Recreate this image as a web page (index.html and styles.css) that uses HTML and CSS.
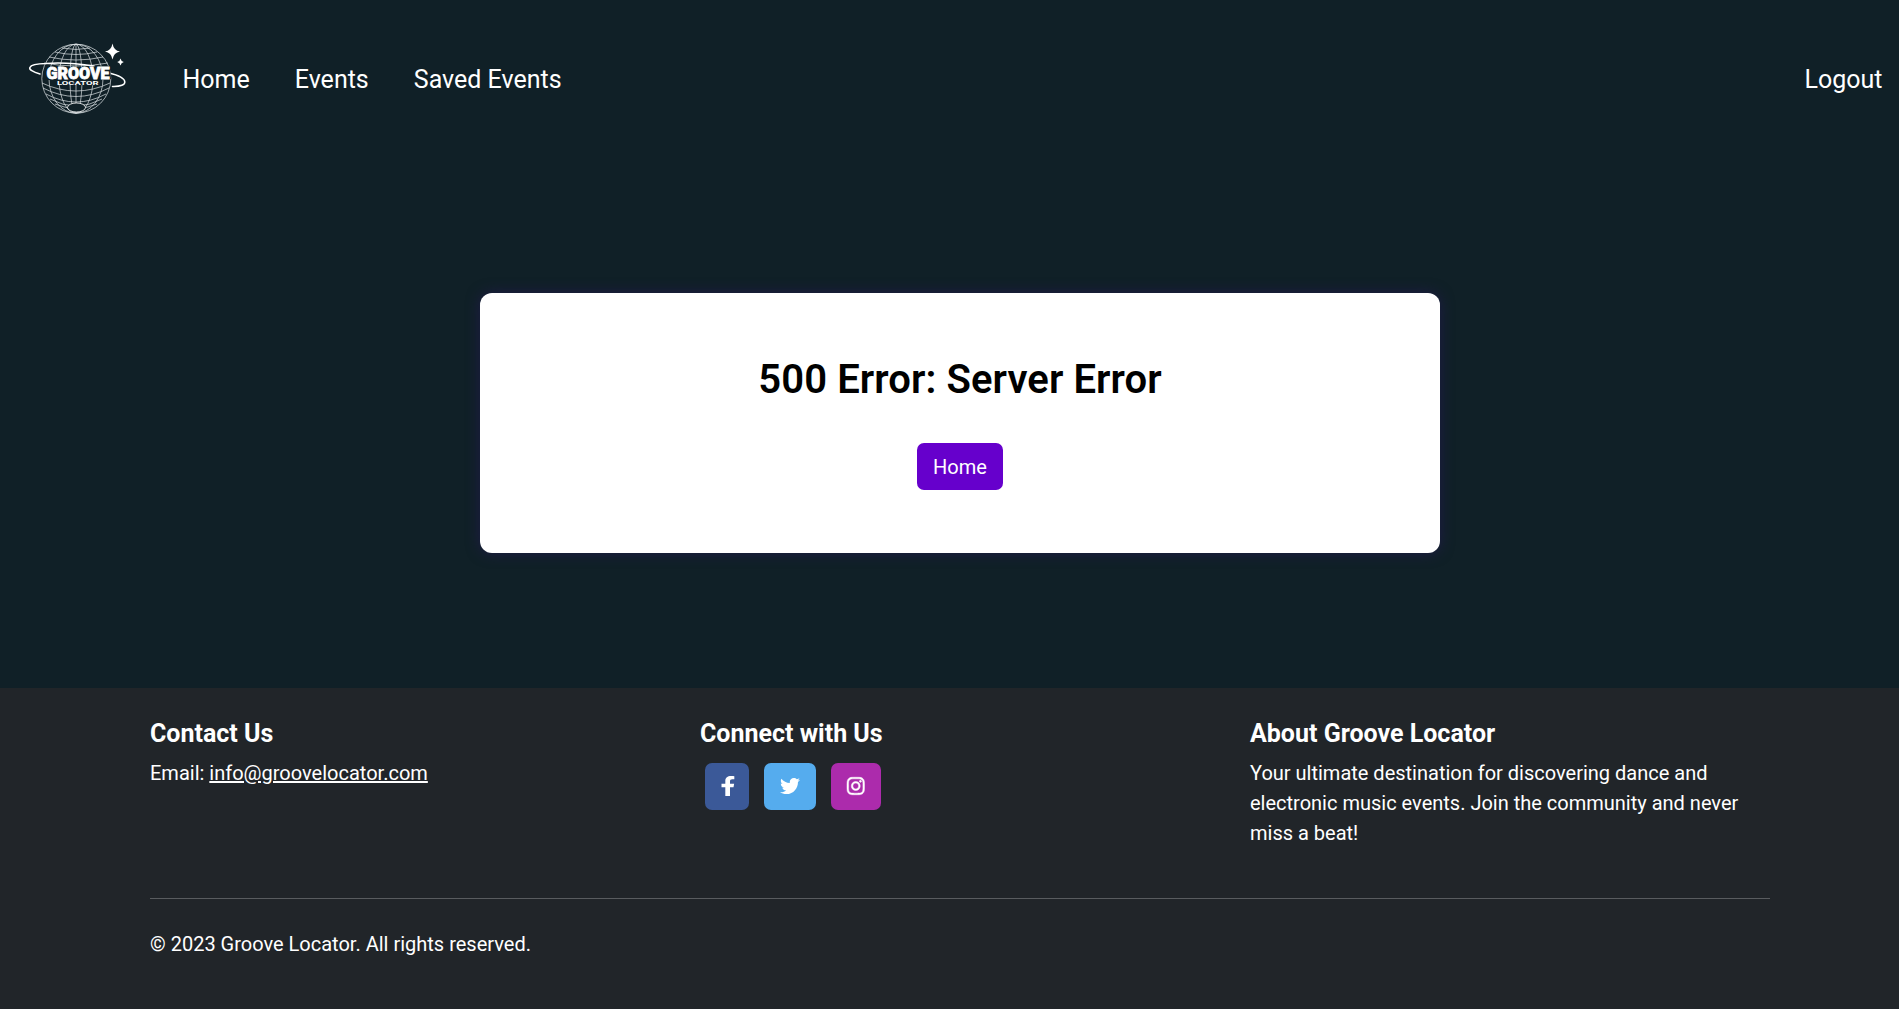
FILE: index.html
```html
<!DOCTYPE html>
<html lang="en">
<head>
<meta charset="utf-8">
<title>Groove Locator</title>
<link rel="stylesheet" href="styles.css">
</head>
<body>
<nav class="navbar">
  <a class="brand" href="#" aria-label="Groove Locator">
    <svg class="logo" viewBox="0 0 115 90">
      <g class="globe">
        <circle cx="56.300" cy="43.700" r="34.500"/>
        <ellipse cx="56" cy="43.700" rx="27" ry="34.500"/>
        <ellipse cx="56" cy="43.700" rx="17" ry="34.500"/>
        <ellipse cx="56" cy="43.700" rx="6" ry="34.500"/>
        <path d="M56 9v59M42 13q14 3 28 0M35 17q21 5 42 0M29 22q27 6 54 0M24 28q32 6 64 0M22 48q34 16 68 0M23 53q33 17 66 0M26 59q30 16 60 0M30 64q26 14 52 0M35 69q21 9 42 0"/>
      </g>
      <ellipse class="pole" cx="56.500" cy="72.500" rx="9" ry="4.500"/>
      <path class="ring" d="M20 39C5 35 6 29 26 28.500Q47 27 74 31M89 38C110 43 109 52 92.500 51.500"/>
      <path class="band" d="M25 33l65-2 1 13-10 1v5H36v-5H25z"/>
      <text class="word" x="26.500" y="44.300" textLength="63" lengthAdjust="spacingAndGlyphs">GROOVE</text>
      <text class="subword" x="37" y="49.800" textLength="41.500" lengthAdjust="spacingAndGlyphs">LOCATOR</text>
      <path class="star" d="M92.500 8.500q1.200 7 7.500 8-6.300 1-7.500 8-1.200-7-7.500-8 6.300-1 7.500-8zM100.500 23.500q.6 3 3.300 3.500-2.700.5-3.300 3.500-.6-3-3.300-3.500 2.700-.5 3.300-3.500z"/>
    </svg>
  </a>
  <a class="nav-link" href="#">Home</a>
  <a class="nav-link" href="#">Events</a>
  <a class="nav-link" href="#">Saved Events</a>
  <a class="nav-link logout" href="#">Logout</a>
</nav>
<main class="main">
  <section class="card">
    <h1 class="card-title">500 Error: Server Error</h1>
    <a class="home-button" href="#">Home</a>
  </section>
</main>
<footer class="footer">
  <div class="columns">
    <section>
      <h2 class="heading">Contact Us</h2>
      <p class="text">Email: <a class="mail" href="#">info@groovelocator.com</a></p>
    </section>
    <section>
      <h2 class="heading">Connect with Us</h2>
      <div class="socials">
        <a class="social facebook" href="#" aria-label="Facebook"><svg width="13" height="20" viewBox="12 0 278 512" preserveAspectRatio="none"><path d="M279.140 288l14.220-92.660h-88.910v-60.130c0-25.350 12.420-50.060 52.240-50.060h40.420V6.260S260.430 0 225.360 0c-73.220 0-121.080 44.380-121.080 124.720v70.620H22.890V288h81.390v224h100.170V288z"/></svg></a>
        <a class="social twitter" href="#" aria-label="Twitter"><svg width="20" height="20" viewBox="0 0 512 512"><path d="M459.370 151.716c.325 4.548.325 9.097.325 13.645 0 138.720-105.583 298.558-298.558 298.558-59.452 0-114.680-17.219-161.137-47.106 8.447.974 16.568 1.299 25.340 1.299 49.055 0 94.213-16.568 130.274-44.832-46.132-.975-84.792-31.188-98.112-72.772 6.498.974 12.995 1.624 19.818 1.624 9.421 0 18.843-1.300 27.614-3.573-48.081-9.747-84.143-51.980-84.143-102.985v-1.299c13.969 7.797 30.214 12.670 47.431 13.319-28.264-18.843-46.781-51.005-46.781-87.391 0-19.492 5.197-37.360 14.294-52.954 51.655 63.675 129.300 105.258 216.365 109.807-1.624-7.797-2.599-15.918-2.599-24.040 0-57.828 46.782-104.934 104.934-104.934 30.213 0 57.502 12.670 76.670 33.137 23.715-4.548 46.456-13.320 66.599-25.340-7.798 24.366-24.366 44.833-46.132 57.827 21.117-2.273 41.584-8.122 60.426-16.243-14.292 20.791-32.161 39.308-52.628 54.253z"/></svg></a>
        <a class="social instagram" href="#" aria-label="Instagram"><svg width="17.5" height="20" viewBox="0 0 448 512"><path d="M224.100 141c-63.600 0-114.900 51.300-114.900 114.900s51.300 114.900 114.900 114.900S339 319.500 339 255.900 287.700 141 224.100 141zm0 189.600c-41.100 0-74.700-33.500-74.700-74.700s33.500-74.700 74.700-74.700 74.700 33.500 74.700 74.700-33.600 74.700-74.700 74.700zm146.400-194.300c0 14.900-12 26.800-26.800 26.800-14.900 0-26.800-12-26.800-26.800s12-26.800 26.800-26.800 26.800 12 26.800 26.800zm76.100 27.200c-1.700-35.900-9.900-67.700-36.200-93.900-26.200-26.200-58-34.400-93.900-36.200-37-2.100-147.900-2.100-184.900 0-35.800 1.700-67.600 9.900-93.900 36.100s-34.400 58-36.200 93.900c-2.100 37-2.100 147.900 0 184.900 1.700 35.900 9.900 67.700 36.200 93.900s58 34.400 93.900 36.200c37 2.100 147.900 2.100 184.900 0 35.900-1.700 67.700-9.900 93.900-36.200 26.200-26.200 34.400-58 36.200-93.900 2.100-37 2.100-147.800 0-184.800zM398.800 388c-7.800 19.600-22.900 34.700-42.600 42.600-29.500 11.700-99.500 9-132.100 9s-102.700 2.600-132.100-9c-19.600-7.800-34.700-22.900-42.600-42.600-11.700-29.500-9-99.500-9-132.100s-2.600-102.700 9-132.100c7.800-19.600 22.900-34.700 42.600-42.600 29.500-11.700 99.500-9 132.100-9s102.700-2.600 132.100 9c19.600 7.800 34.700 22.900 42.600 42.600 11.700 29.500 9 99.500 9 132.100s2.700 102.700-9 132.100z"/></svg></a>
      </div>
    </section>
    <section>
      <h2 class="heading">About Groove Locator</h2>
      <p class="text">Your ultimate destination for discovering dance and electronic music events. Join the community and never miss a beat!</p>
    </section>
  </div>
  <p class="copyright">© 2023 Groove Locator. All rights reserved.</p>
</footer>
</body>
</html>
```

FILE: styles.css
```css
* { box-sizing: border-box; }
body {
  margin: 0;
  height: 1009px;
  display: flex;
  flex-direction: column;
  background: #102027;
  color: #fff;
  font: 400 20px/30px Roboto, sans-serif;
}
a { color: inherit; text-decoration: none; }
h1, h2, p { margin: 0; }
svg { display: block; }

.navbar {
  height: 157px;
  padding: 2px 16.5px 0 20px;
  display: flex;
  align-items: center;
  gap: 45px;
  font-size: 25px;
}
.brand { margin: 1px 2.5px 0 0; }
.logo { width: 115px; height: 90px; }
.logout { margin-left: auto; }
.globe { fill: none; stroke: #dce2e5; stroke-width: .7; }
.pole { fill: #102027; stroke: #fff; stroke-width: .8; }
.ring { fill: none; stroke: #fff; stroke-width: 1.5; stroke-linecap: round; }
.band { fill: #102027; }
.star { fill: #fff; }
.word {
  fill: #fff;
  stroke: #fff;
  stroke-width: .8;
  font: 900 16px Roboto, sans-serif;
}
.subword { fill: #fff; font: 700 6px Roboto, sans-serif; }

.main {
  height: 531px;
  padding: 136px 0 0 21px;
  display: flex;
  justify-content: center;
  align-items: flex-start;
}
.card {
  width: 960px;
  height: 260px;
  padding-top: 63px;
  display: flex;
  flex-direction: column;
  align-items: center;
  gap: 39px;
  border-radius: 12px;
  background: #fff;
  box-shadow: 0 0 14px #1f1b47;
}
.card-title { color: #000; font-size: 40px; font-weight: 600; line-height: 48px; letter-spacing: .09px; }
.home-button {
  height: 47px;
  padding: 0 16px;
  border-radius: 7px;
  background: #60c;
  line-height: 48px;
}

.footer {
  flex: 1;
  padding: 31px 129px 0 150px;
  background: #212529;
}
.columns {
  height: 180px;
  margin-bottom: 30px;
  display: grid;
  grid-template-columns: repeat(3, 520px);
  column-gap: 30px;
  border-bottom: 1px solid #595c5f;
  align-items: start;
}
.heading { margin-bottom: 9px; font-size: 25px; font-weight: 700; line-height: 30px; }
.mail { text-decoration: underline; }
.socials { padding: 5px 5px 0; display: flex; gap: 15px; }
.social {
  height: 47px;
  padding: 0 16px;
  display: flex;
  align-items: center;
  border-radius: 7px;
}
.social svg { fill: #fff; transform: translateY(-1px); overflow: visible; }
.facebook { padding: 0 15.5px; background: #3b5998; }
.twitter { background: #55acee; }
.instagram { padding: 0 16.25px; background: #ac2bac; }
.instagram svg { stroke: #fff; stroke-width: 12; }
.copyright { line-height: 30px; }
```
